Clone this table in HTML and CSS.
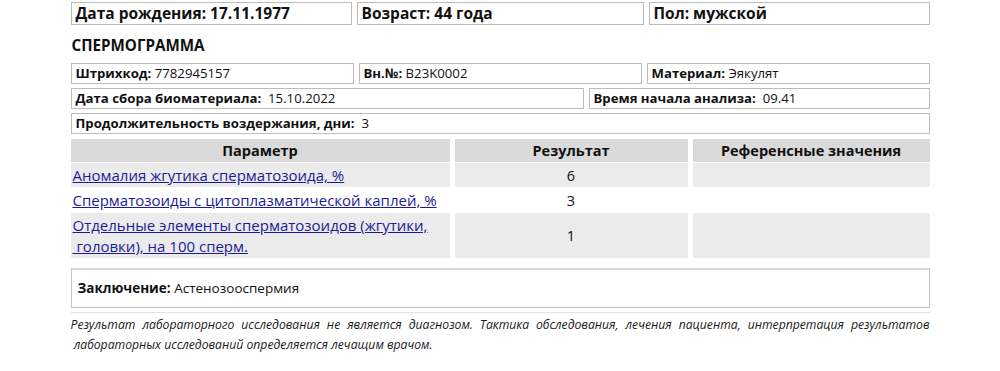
FILE: index.html
```html
<!DOCTYPE html>
<html lang="ru">
	<head>
		<meta charset="UTF-8" />
		<meta name="viewport" content="width=device-width, initial-scale=1.0" />
		<title>Спермограмма</title>
		<link rel="stylesheet" href="styles.css">
	</head>
	<body>
		<div class="report">
			<div class="info-row patient-row">
				<div class="info-box birth"><b>Дата рождения: 17.11.1977</b></div>
				<div class="info-box age"><b>Возраст: 44 года</b></div>
				<div class="info-box sex"><b>Пол: мужской</b></div>
			</div>

			<h2 class="report-title">СПЕРМОГРАММА</h2>

			<div class="info-row">
				<div class="info-box third"><b>Штрихкод:</b> 7782945157</div>
				<div class="info-box third"><b>Вн.№:</b> B23K0002</div>
				<div class="info-box third"><b>Материал:</b> Эякулят</div>
			</div>
			<div class="info-row">
				<div class="info-box collect-date"><b>Дата сбора биоматериала:</b>&nbsp; 15.10.2022</div>
				<div class="info-box start-time"><b>Время начала анализа:</b>&nbsp; 09.41</div>
			</div>
			<div class="info-row">
				<div class="info-box full"><b>Продолжительность воздержания, дни:</b>&nbsp; 3</div>
			</div>

			<table class="results">
				<thead>
					<tr>
						<th class="col-param">Параметр</th>
						<th class="col-result">Результат</th>
						<th class="col-ref">Референсные значения</th>
					</tr>
				</thead>
				<tbody>
					<tr class="shaded">
						<td><a href="#">Аномалия жгутика сперматозоида, %</a></td>
						<td class="value">6</td>
						<td></td>
					</tr>
					<tr>
						<td><a href="#">Сперматозоиды с цитоплазматической каплей, %</a></td>
						<td class="value">3</td>
						<td></td>
					</tr>
					<tr class="shaded tall">
						<td><a href="#">Отдельные элементы сперматозоидов (жгутики,<br>&nbsp;головки), на 100 сперм.</a></td>
						<td class="value">1</td>
						<td></td>
					</tr>
				</tbody>
			</table>

			<div class="conclusion"><b>Заключение:</b> Астенозооспермия</div>

			<p class="disclaimer">
				Результат лабораторного исследования не является диагнозом. Тактика обследования, лечения пациента, интерпретация результатов
				&nbsp;лабораторных исследований определяется лечащим врачом.
			</p>
		</div>
	</body>
</html>
```

FILE: styles.css
```css
body {
	margin: 0;
	background: #fff;
	color: #111;
	font-family: "Open Sans", "Noto Sans", sans-serif;
}
.report {
	width: 859px;
	margin: 0 auto;
	padding-top: 2px;
}
b {
	font-weight: 700;
}

/* boxed label/value rows */
.info-row {
	display: flex;
	gap: 5px;
	margin-bottom: 4px;
}
.info-box {
	box-sizing: border-box;
	height: 21px;
	padding: 0 4px;
	border: 1px solid #bcbcbc;
	font-size: 13.2px;
	line-height: 19px;
	white-space: nowrap;
	overflow: hidden;
}
.patient-row .info-box {
	height: 23px;
	font-size: 15.5px;
	line-height: 21px;
}
.birth,
.sex {
	width: 281px;
}
.age {
	width: 287px;
}
.third {
	flex: 1;
}
.collect-date {
	width: 513px;
}
.start-time {
	flex: 1;
}
.full {
	flex: 1;
}

.report-title {
	margin: 10px 0 8px 1px;
	font-size: 15.2px;
	line-height: 20px;
	font-weight: 700;
}

/* results table */
.results {
	width: calc(100% + 10px);
	margin: 4px -5px 0;
	border-spacing: 5px 1px;
	table-layout: fixed;
	font-size: 14.5px;
}
.results th {
	height: 23px;
	padding: 0;
	background: #dadada;
	font-size: 14.5px;
	font-weight: 700;
	text-align: center;
}
.col-param {
	width: 379px;
}
.col-result {
	width: 233px;
}
.results td {
	height: 24px;
	padding: 0 2px;
	line-height: 21px;
	vertical-align: middle;
}
.results tr.shaded td {
	background: #ebebeb;
}
.results tr.tall td {
	height: 45px;
}
.results a {
	color: #1b1b96;
	font-size: 15px;
	text-decoration: underline;
}
.results td.value {
	text-align: center;
}

.conclusion {
	box-sizing: border-box;
	height: 40px;
	margin-top: 9px;
	padding: 0 6px;
	border: 1px solid #c4c4c4;
	border-top: 2px solid #d6d6d6;
	font-size: 13.5px;
	line-height: 37px;
}

.disclaimer {
	margin: 4px 0 0;
	padding-top: 2px;
	border-top: 1px solid #e4e4e4;
	font-size: 12.2px;
	font-style: italic;
	line-height: 20px;
	text-align: justify;
	text-align-last: left;
	color: #1a1a1a;
}
```
